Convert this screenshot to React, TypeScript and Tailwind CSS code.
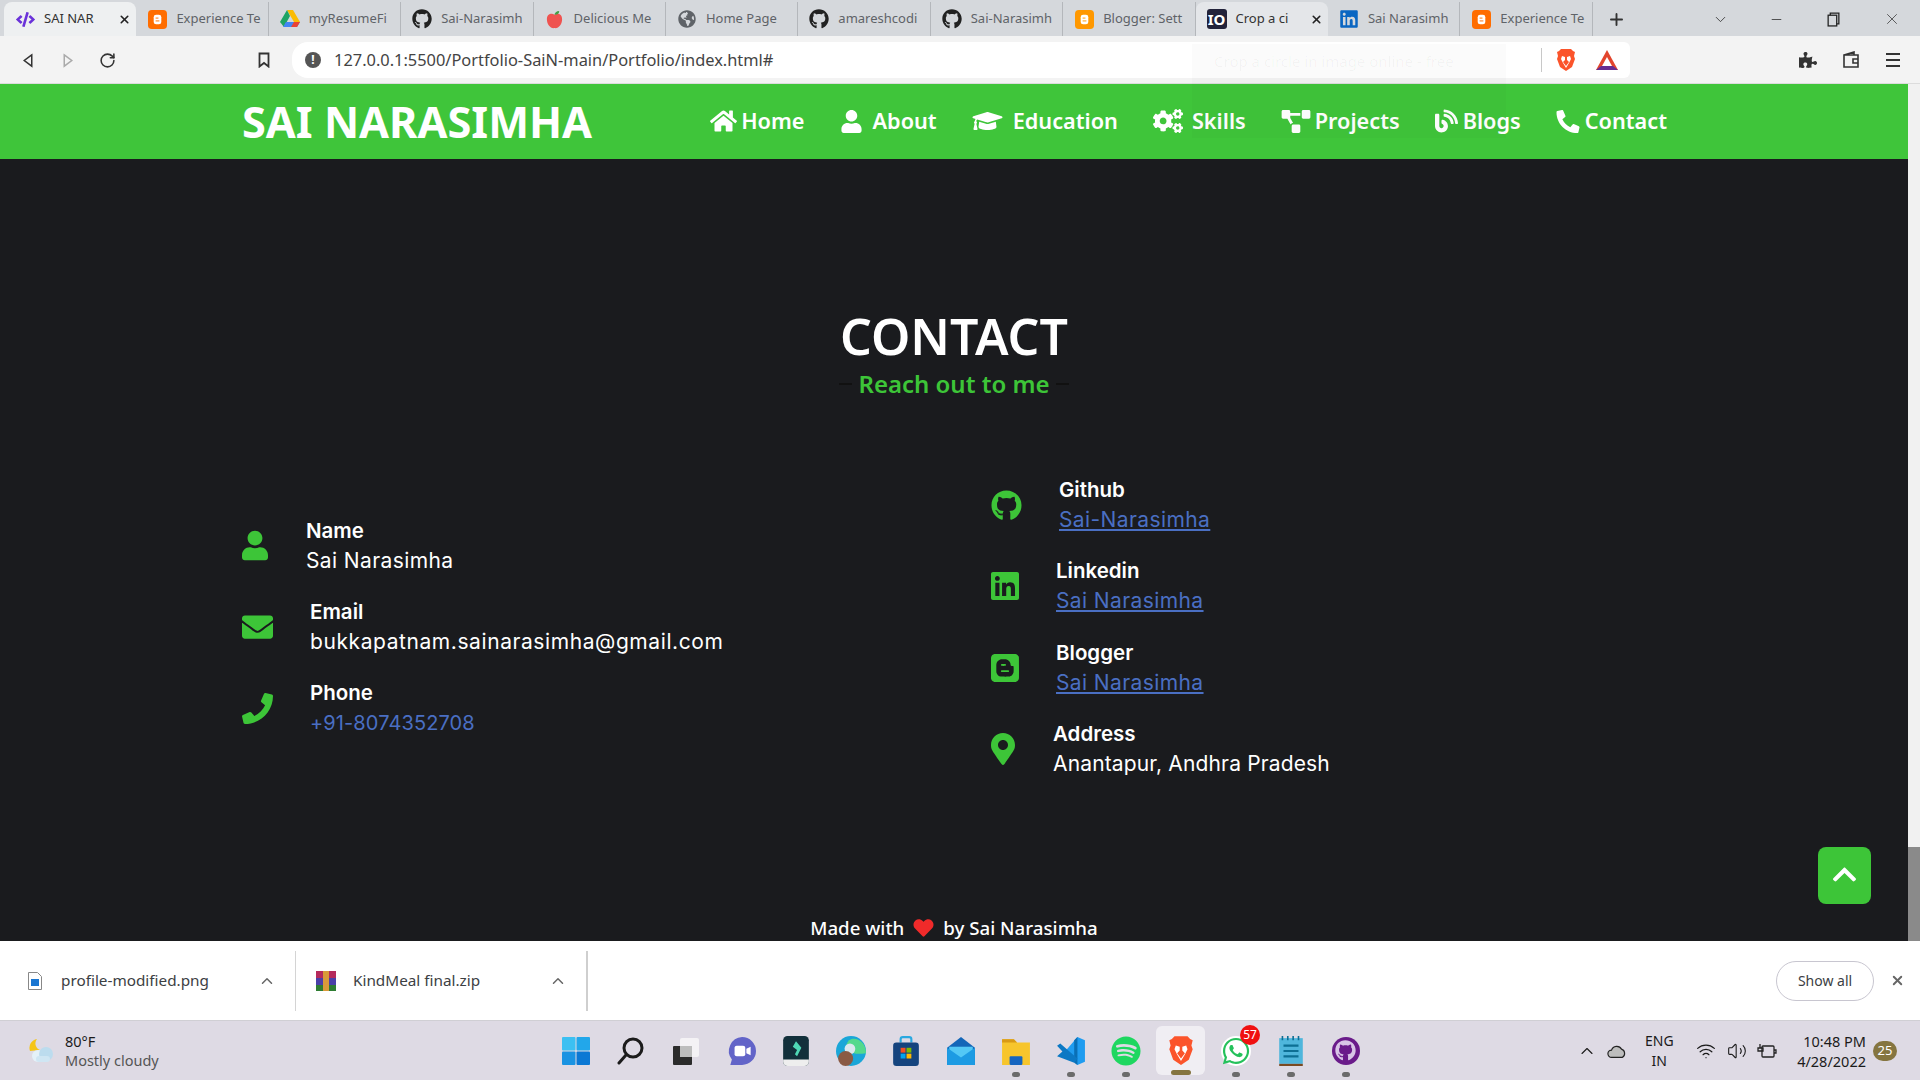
import type { ReactNode } from 'react';
import {
  FaBlog,
  FaBlogger,
  FaChevronUp,
  FaCode,
  FaCogs,
  FaEnvelope,
  FaGithub,
  FaGlobeAmericas,
  FaGraduationCap,
  FaHeart,
  FaHome,
  FaLinkedin,
  FaMapMarkerAlt,
  FaPhone,
  FaPhoneAlt,
  FaProjectDiagram,
  FaPuzzlePiece,
  FaSpotify,
  FaUser,
  FaWhatsapp,
} from 'react-icons/fa';
import { ChevronDown, ChevronUp, Minus, Plus, RotateCw, Volume2, Wifi, X } from 'lucide-react';

const GREEN = 'text-[#3dc538]';

function BloggerIcon({ color }: { color: string }) {
  return (
    <svg viewBox="0 0 20 20" className="h-[19px] w-[19px]">
      <rect width="20" height="20" rx="4" fill={color} />
      <rect x="6" y="5" width="8" height="10" rx="2.5" fill="#fff" />
      <rect x="8" y="8" width="3" height="1" fill={color} />
      <rect x="8" y="11" width="4" height="1" fill={color} />
    </svg>
  );
}

function Drive() {
  return (
    <svg viewBox="0 0 20 18" className="h-[18px] w-[20px]">
      <path d="M7 0h6l7 12h-6z" fill="#fbbc04" />
      <path d="M7 0l3 6-6 11-4-5z" fill="#1fa463" />
      <path d="M6 12h14l-3 5H3z" fill="#4285f4" />
      <path d="M14 12h6l-3 5h-6z" fill="#ea4335" />
    </svg>
  );
}

function Apple() {
  return (
    <svg viewBox="0 0 20 20" className="h-[19px] w-[19px]">
      <path d="M10 5c-3-2-8-1-8 5 0 5 4 10 8 9 4 1 8-4 8-9 0-6-5-7-8-5z" fill="#ef5350" />
      <path d="M10 5c0-2 2-4 5-4 0 3-2 4-5 4z" fill="#43a047" />
    </svg>
  );
}

const tabs: { icon: ReactNode; title: string; active?: boolean; hover?: boolean }[] = [
  { icon: <FaCode className="h-[19px] w-[19px] text-[#6a32d9]" />, title: 'SAI NAR', active: true },
  { icon: <BloggerIcon color="#ff6d00" />, title: 'Experience Te' },
  { icon: <Drive />, title: 'myResumeFi' },
  { icon: <FaGithub className="h-[20px] w-[20px] text-[#222]" />, title: 'Sai-Narasimh' },
  { icon: <Apple />, title: 'Delicious Me' },
  { icon: <FaGlobeAmericas className="h-[18px] w-[18px] text-[#5f6368]" />, title: 'Home Page' },
  { icon: <FaGithub className="h-[20px] w-[20px] text-[#222]" />, title: 'amareshcodi' },
  { icon: <FaGithub className="h-[20px] w-[20px] text-[#222]" />, title: 'Sai-Narasimh' },
  { icon: <BloggerIcon color="#ff9800" />, title: 'Blogger: Sett' },
  {
    icon: (
      <span className="flex h-[20px] w-[20px] items-center justify-center rounded-[3px] bg-[#23233a] text-[15px] leading-none font-bold text-white">
        IO
      </span>
    ),
    title: 'Crop a ci',
    hover: true,
  },
  { icon: <FaLinkedin className="h-[20px] w-[20px] text-[#0a66c2]" />, title: 'Sai Narasimh' },
  { icon: <BloggerIcon color="#ff6d00" />, title: 'Experience Te' },
];

function TabStrip() {
  return (
    <div className="flex h-[36px] shrink-0 items-end bg-[#d5d8dc] pl-[4px] font-['Noto_Sans',sans-serif] text-[13px]">
      {tabs.map((tab, i) => {
        const lit = tab.active || tab.hover;
        return (
          <div
            key={i}
            className={`flex h-[34px] w-[132.4px] shrink-0 items-center pl-[11px] ${
              tab.active ? 'rounded-t-lg bg-[#eef0f1]' : tab.hover ? 'rounded-t-lg bg-[#e4e6e9]' : 'border-r border-[#b4b7bb]'
            }`}
          >
            <span className="flex w-[20px] shrink-0 justify-center">{tab.icon}</span>
            <span className={`ml-[9px] min-w-0 flex-1 whitespace-nowrap ${lit ? 'text-[#333]' : 'text-[#5f6368]'}`}>{tab.title}</span>
            {lit ? <X className="mx-[5px] h-[13px] w-[13px] shrink-0 text-[#222]" strokeWidth={3} /> : <span className="w-[7px] shrink-0" />}
          </div>
        );
      })}
      <div className="flex h-[34px] items-center pl-[14px]">
        <Plus className="h-[19px] w-[19px] text-[#333]" strokeWidth={2.4} />
      </div>
      <div className="ml-auto flex h-[34px] items-center text-[#333]">
        <ChevronDown className="h-[17px] w-[17px]" strokeWidth={1.2} />
        <Minus className="ml-[40px] h-[15px] w-[15px]" strokeWidth={1.3} />
        <svg viewBox="0 0 14 14" className="ml-[42px] h-[15px] w-[15px]" fill="none" stroke="#222" strokeWidth="1.2">
          <rect x="2" y="3" width="8" height="10" />
          <path d="M4 3V1h8v10h-2" />
        </svg>
        <X className="mr-[19px] ml-[42px] h-[18px] w-[18px]" strokeWidth={1} />
      </div>
    </div>
  );
}

function BraveLion({ size }: { size: number }) {
  return (
    <svg viewBox="0 0 20 24" width={size} height={size * 1.2}>
      <path d="M5 1h10l2 2 2 1-1 4 1 3-3 8-6 4-6-4-3-8 1-3-1-4 2-1z" fill="#fb542b" />
      <path d="M6 8l3 1v3l-2 2 3 4 3-4-2-2V9l3-1 1 3-2 4-3 5-3-5-2-4z" fill="#fff" />
    </svg>
  );
}

function Toolbar() {
  return (
    <div className="flex h-[48px] shrink-0 items-center border-b border-[#dcdcdc] bg-[#f3f3f3] pt-[1px] text-[#444]">
      <svg viewBox="0 0 12 16" className="ml-[22px] h-[15px] w-[12px]" fill="none" stroke="#333" strokeWidth="1.6">
        <path d="M10 2L2 8l8 6z" />
      </svg>
      <svg viewBox="0 0 12 16" className="ml-[28px] h-[15px] w-[12px]" fill="none" stroke="#aaa" strokeWidth="1.6">
        <path d="M2 2l8 6-8 6z" />
      </svg>
      <RotateCw className="ml-[25px] h-[17px] w-[17px] text-[#333]" strokeWidth={2.2} />
      <svg viewBox="0 0 12 16" className="ml-[142px] h-[16px] w-[12px]" fill="none" stroke="#333" strokeWidth="1.8">
        <path d="M1.5 1.5h9v13L6 11l-4.500 3.500z" />
      </svg>
      <div className="relative ml-[22px] flex h-[36px] w-[1338px] items-center rounded-l-2xl rounded-r-md bg-white pl-[13px] font-['Noto_Sans',sans-serif] text-[16.4px] text-[#444]">
        <span className="flex h-[16px] w-[16px] items-center justify-center rounded-full bg-[#555] text-[12px] leading-none font-bold text-white">!</span>
        <span className="ml-[13px]">127.0.0.1:5500/Portfolio-SaiN-main/Portfolio/index.html#</span>
        <span className="ml-auto h-[24px] w-px bg-[#c8c8c8]" />
        <span className="ml-[14px] flex">
          <BraveLion size={20} />
        </span>
        <svg viewBox="0 0 22 20" className="mr-[12px] ml-[20px] h-[20px] w-[22px]">
          <path d="M11 0l11 20H0z" fill="#e2452d" />
          <path d="M11 7l5 9H6z" fill="#fff" />
          <path d="M0 20l5-4h12l5 4z" fill="#662d91" />
        </svg>
      </div>
      <FaPuzzlePiece className="ml-[169px] h-[18px] w-[18px] text-[#333]" />
      <svg viewBox="0 0 18 18" className="ml-[25px] h-[18px] w-[18px]" fill="none" stroke="#333" strokeWidth="1.6">
        <path d="M2 4l10-3v3M2 4h14v12H2zM11 8h5v4h-5z" />
      </svg>
      <div className="ml-[26px] flex w-[14px] flex-col gap-[4px]">
        <span className="h-[2px] bg-[#333]" />
        <span className="h-[2px] bg-[#333]" />
        <span className="h-[2px] bg-[#333]" />
      </div>
    </div>
  );
}

const navLinks: { icon: ReactNode; label: string; gap: string }[] = [
  { icon: <FaHome className="h-[24px] w-[27px]" />, label: 'Home', gap: 'gap-[4px]' },
  { icon: <FaUser className="h-[23px] w-[23px]" />, label: 'About', gap: 'gap-[10px]' },
  { icon: <FaGraduationCap className="h-[24px] w-[31px]" />, label: 'Education', gap: 'gap-[10px]' },
  { icon: <FaCogs className="h-[24px] w-[30px]" />, label: 'Skills', gap: 'gap-[9px]' },
  { icon: <FaProjectDiagram className="h-[23px] w-[30px]" />, label: 'Projects', gap: 'gap-[4px]' },
  { icon: <FaBlog className="h-[24px] w-[23px]" />, label: 'Blogs', gap: 'gap-[5px]' },
  { icon: <FaPhoneAlt className="h-[23px] w-[24px]" />, label: 'Contact', gap: 'gap-[5px]' },
];

function Nav() {
  return (
    <nav className="flex h-[75px] shrink-0 items-center justify-between bg-[#3fc53a] pr-[241px] pl-[242px] font-['Noto_Sans',sans-serif] text-white">
      <span className="text-[43.3px] leading-none font-bold">SAI NARASIMHA</span>
      <div className="flex items-center gap-[35px]">
        {navLinks.map((link) => (
          <span key={link.label} className={`flex items-center ${link.gap} text-[21.7px] font-semibold`}>
            {link.icon}
            {link.label}
          </span>
        ))}
      </div>
    </nav>
  );
}

type ContactRow = { icon: ReactNode; label: string; value: string; kind?: 'link' | 'tel'; gap: string; spacing?: string };

const leftRows: ContactRow[] = [
  { icon: <FaUser className="h-[31px] w-[26px]" />, label: 'Name', value: 'Sai Narasimha', gap: 'gap-[38px]' },
  { icon: <FaEnvelope className="h-[32px] w-[31px]" />, label: 'Email', value: 'bukkapatnam.sainarasimha@gmail.com', gap: 'gap-[37px]', spacing: 'tracking-[0.58px]' },
  { icon: <FaPhone className="h-[31px] w-[31px]" />, label: 'Phone', value: '+91-8074352708', kind: 'tel', gap: 'gap-[37px]' },
];

const rightRows: ContactRow[] = [
  { icon: <FaGithub className="h-[31px] w-[31px]" />, label: 'Github', value: 'Sai-Narasimha', kind: 'link', gap: 'gap-[37px]' },
  { icon: <FaLinkedin className="h-[32px] w-[28px]" />, label: 'Linkedin', value: 'Sai Narasimha', kind: 'link', gap: 'gap-[37px]' },
  { icon: <FaBlogger className="h-[32px] w-[28px]" />, label: 'Blogger', value: 'Sai Narasimha', kind: 'link', gap: 'gap-[37px]' },
  { icon: <FaMapMarkerAlt className="h-[32px] w-[24px]" />, label: 'Address', value: 'Anantapur, Andhra Pradesh', gap: 'gap-[38px]', spacing: 'tracking-[0.15px]' },
];

function Row({ row }: { row: ContactRow }) {
  return (
    <div className={`flex h-[60px] items-center ${row.gap}`}>
      <span className={`flex shrink-0 ${GREEN}`}>{row.icon}</span>
      <div className="leading-[30px]">
        <p className="text-[20.5px] font-semibold text-white">{row.label}</p>
        {row.kind === 'link' && <p className="text-[21px] tracking-[0.4px] text-[#4a6fc3] underline underline-offset-2">{row.value}</p>}
        {row.kind === 'tel' && <p className="text-[20px] tracking-[0.1px] text-[#4a6fc3]">{row.value}</p>}
        {!row.kind && <p className={`text-[21px] text-white ${row.spacing ?? 'tracking-[0.4px]'}`}>{row.value}</p>}
      </div>
    </div>
  );
}

function Contact() {
  return (
    <section className="flex min-h-0 flex-1 flex-col overflow-hidden bg-[#1a1b1e]">
      <div className="pt-[149px] text-center font-['Noto_Sans',sans-serif]">
        <h2 className="text-[50px] leading-[56px] font-semibold text-white">CONTACT</h2>
        <div className="mt-[4px] flex items-center justify-center gap-[6px] text-[24px] leading-[32px] font-semibold text-[#3dc538]">
          <span className="h-[2px] w-[13px] bg-[#111]" />
          Reach out to me
          <span className="h-[2px] w-[13px] bg-[#111]" />
        </div>
      </div>
      <div className="mt-[75px] grid grid-cols-[749px_1fr] items-center pl-[242px] font-['Inter',sans-serif]">
        <div className="flex flex-col gap-[21.330px]">
          {leftRows.map((row) => (
            <Row key={row.label} row={row} />
          ))}
        </div>
        <div className="flex flex-col gap-[21.330px]">
          {rightRows.map((row) => (
            <Row key={row.label} row={row} />
          ))}
        </div>
      </div>
      <p className="mt-[135px] flex items-center justify-center gap-[9px] font-['Noto_Sans',sans-serif] text-[18.7px] leading-[28px] font-medium text-white">
        Made with
        <FaHeart className="h-[20px] w-[21px] text-[#f02a2a]" />
        by Sai Narasimha
      </p>
    </section>
  );
}

function Downloads() {
  return (
    <div className="flex h-[80px] shrink-0 items-center border-b border-[#d0cfd4] bg-white font-['Noto_Sans',sans-serif] text-[15.3px] text-[#3c4043]">
      <div className="flex h-[60px] w-[296px] items-center border-r border-[#d4d4d4] pl-[28px]">
        <svg viewBox="0 0 14 18" className="h-[18px] w-[14px]">
          <path d="M.5.5h9l4 4v13H.5z" fill="#fff" stroke="#888" />
          <rect x="3" y="7" width="8" height="7" fill="#1976d2" />
        </svg>
        <span className="ml-[19px]">profile-modified.png</span>
        <ChevronUp className="mr-[19px] ml-auto h-[18px] w-[18px] text-[#666]" strokeWidth={2} />
      </div>
      <div className="flex h-[60px] w-[292px] items-center border-r-2 border-[#cfcfcf] pl-[20px]">
        <svg viewBox="0 0 20 20" className="h-[20px] w-[20px]">
          <rect width="20" height="7" fill="#b52a5c" />
          <rect y="7" width="20" height="7" fill="#4a3fa8" />
          <rect y="14" width="20" height="6" fill="#2e7d32" />
          <rect x="7" width="6" height="20" fill="#d99a3a" />
        </svg>
        <span className="ml-[17px]">KindMeal final.zip</span>
        <ChevronUp className="mr-[19px] ml-auto h-[18px] w-[18px] text-[#666]" strokeWidth={2} />
      </div>
      <span className="mr-[1px] ml-auto flex h-[40px] w-[98px] items-center justify-center rounded-full border border-[#c8c6d0] text-[14px]">Show all</span>
      <X className="mx-[15px] h-[15px] w-[15px] text-[#666]" strokeWidth={3} />
    </div>
  );
}

const taskIcons: { icon: ReactNode; dot?: boolean; active?: boolean; badge?: string }[] = [
  {
    icon: (
      <svg viewBox="0 0 28 28" className="h-[28px] w-[28px]">
        <rect width="13.500" height="13.500" rx="1" fill="#3cc0f2" />
        <rect x="14.500" width="13.500" height="13.500" rx="1" fill="#22a7ea" />
        <rect y="14.500" width="13.500" height="13.500" rx="1" fill="#1a93e2" />
        <rect x="14.500" y="14.500" width="13.500" height="13.500" rx="1" fill="#0b78d4" />
      </svg>
    ),
  },
  {
    icon: (
      <svg viewBox="0 0 28 28" className="h-[28px] w-[28px]" fill="none" stroke="#1b1b1b" strokeWidth="3">
        <circle cx="16" cy="11" r="9" />
        <path d="M9 18l-7 8" strokeLinecap="round" />
      </svg>
    ),
  },
  {
    icon: (
      <svg viewBox="0 0 28 28" className="h-[28px] w-[28px]">
        <rect x="8" y="1" width="19" height="19" rx="2" fill="#f4f2f5" />
        <rect x="1" y="9" width="19" height="19" rx="1" fill="#2b2b2b" />
        <rect x="8" y="9" width="12" height="11" fill="#bdbdbd" />
      </svg>
    ),
  },
  {
    icon: (
      <svg viewBox="0 0 28 28" className="h-[30px] w-[30px]">
        <path d="M15 1a13 13 0 0 1 0 26H4l1.500-5A13 13 0 0 1 15 1z" fill="#6264c8" />
        <rect x="8" y="9" width="10" height="10" rx="2" fill="#fff" />
        <path d="M19 12l4-2v8l-4-2z" fill="#fff" />
      </svg>
    ),
  },
  {
    icon: (
      <svg viewBox="0 0 28 28" className="h-[30px] w-[30px]">
        <rect x="2" width="24" height="28" rx="4" fill="#12303b" />
        <path d="M2 22h24v2a4 4 0 0 1-4 4H6a4 4 0 0 1-4-4z" fill="#eee" />
        <path d="M14 5l5 6-4 8-2-2 2-4-4-3z" fill="#4fd8b5" />
      </svg>
    ),
  },
  {
    icon: (
      <svg viewBox="0 0 28 28" className="h-[30px] w-[30px]">
        <circle cx="14" cy="14" r="14" fill="#1aa6d8" />
        <path d="M28 16C28 6 20 1 14 3 9 5 8 12 13 15c4 2 9 2 15 1z" fill="#54d98c" />
        <circle cx="13" cy="12" r="5" fill="#dbe8ee" />
        <circle cx="9" cy="21" r="7" fill="#8a5a44" />
      </svg>
    ),
  },
  {
    icon: (
      <svg viewBox="0 0 28 28" className="h-[30px] w-[30px]">
        <path d="M9 6V3a2 2 0 0 1 2-2h6a2 2 0 0 1 2 2v3" fill="none" stroke="#29a8e0" strokeWidth="2" />
        <rect x="2" y="6" width="24" height="22" rx="3" fill="#15447e" />
        <rect x="9" y="11" width="4.500" height="4.500" fill="#f25022" />
        <rect x="14.500" y="11" width="4.500" height="4.500" fill="#7fba00" />
        <rect x="9" y="16.500" width="4.500" height="4.500" fill="#00a4ef" />
        <rect x="14.500" y="16.500" width="4.500" height="4.500" fill="#ffb900" />
      </svg>
    ),
  },
  {
    icon: (
      <svg viewBox="0 0 28 28" className="h-[30px] w-[30px]">
        <path d="M14 1l13 10v16H1V11z" fill="#1366b8" />
        <path d="M3 10h22v17H3z" fill="#53c8f5" />
        <path d="M1 11l13 9 13-9v16H1z" fill="#1d9be3" />
      </svg>
    ),
  },
  {
    dot: true,
    icon: (
      <svg viewBox="0 0 28 28" className="h-[30px] w-[30px]">
        <path d="M1 3h11l3 3h12v21H1z" fill="#f7c52c" />
        <path d="M1 3h11l3 3H1z" fill="#d99a15" />
        <rect x="8" y="19" width="12" height="8" rx="1" fill="#1565c0" />
      </svg>
    ),
  },
  {
    dot: true,
    icon: (
      <svg viewBox="0 0 28 28" className="h-[30px] w-[30px]">
        <path d="M20 1l7 3v20l-7 3L8 15z" fill="#1f9cf0" />
        <path d="M20 1v26l-3-2V4z" fill="#0a6fb5" />
        <path d="M1 9l3-2 16 14-3 4L1 19l5-4.500z" fill="#0b78c4" />
      </svg>
    ),
  },
  { dot: true, icon: <FaSpotify className="h-[30px] w-[30px] text-[#1ed760]" /> },
  { active: true, icon: <BraveLion size={26} /> },
  {
    dot: true,
    badge: '57',
    icon: (
      <span className="flex h-[30px] w-[30px] items-center justify-center rounded-full bg-white">
        <FaWhatsapp className="h-[30px] w-[30px] text-[#25c15b]" />
      </span>
    ),
  },
  {
    dot: true,
    icon: (
      <svg viewBox="0 0 28 28" className="h-[30px] w-[30px]">
        <rect x="3" y="2" width="22" height="24" fill="#4fb6dc" />
        <rect x="3" y="26" width="22" height="2" fill="#7a4a22" />
        <path d="M7 9h14M7 14h14M7 19h14" stroke="#0d6f94" strokeWidth="2" />
        <path d="M6 0v4M11 0v4M16 0v4M21 0v4" stroke="#0d6f94" strokeWidth="1.500" />
      </svg>
    ),
  },
  {
    dot: true,
    icon: (
      <span className="flex h-[28px] w-[28px] items-center justify-center rounded-full bg-[#6a1b8a]">
        <FaGithub className="h-[21px] w-[21px] text-[#d8c4e6]" />
      </span>
    ),
  },
];

function Taskbar() {
  return (
    <div className="relative flex h-[59px] shrink-0 items-center bg-[#dedae4] font-['Noto_Sans',sans-serif] text-[13px] text-[#1b1b1b]">
      <svg viewBox="0 0 28 28" className="ml-[27px] h-[28px] w-[28px]">
        <path d="M10 2a7 7 0 0 0 3 11L3 14A9 9 0 0 1 10 2z" fill="#f5c518" />
        <circle cx="11" cy="19" r="6" fill="#e4f1f8" />
        <circle cx="19" cy="17" r="7" fill="#bcdcee" />
        <rect x="9" y="19" width="14" height="6" rx="3" fill="#cfe6f3" />
      </svg>
      <div className="ml-[10px] w-[483px] text-[14.5px] leading-[19px]">
        <p>80°F</p>
        <p className="text-[#555]">Mostly cloudy</p>
      </div>
      <div className="flex">
        {taskIcons.map((item, i) => (
          <div key={i} className="relative flex h-[55px] w-[55px] items-center justify-center">
            {item.active && <span className="absolute inset-y-[3px] inset-x-[3px] rounded-md bg-[#f0eef3]" />}
            <span className="relative flex">{item.icon}</span>
            {item.dot && <span className="absolute bottom-[1px] h-[5px] w-[8px] rounded-sm bg-[#6b6b6b]" />}
            {item.active && <span className="absolute bottom-[3px] h-[5px] w-[20px] rounded-sm bg-[#857540]" />}
            {item.badge && (
              <span className="absolute top-[2px] right-[3px] flex h-[20px] w-[20px] items-center justify-center rounded-full bg-[#f01010] text-[12px] leading-none text-white">
                {item.badge}
              </span>
            )}
          </div>
        ))}
      </div>
      <ChevronUp className="ml-[204px] h-[20px] w-[20px]" strokeWidth={1.3} />
      <svg viewBox="0 0 22 16" className="ml-[10px] h-[16px] w-[20px]">
        <path d="M5 15a4 4 0 0 1 0-8 6 6 0 0 1 11-1 5 5 0 0 1 1 9z" fill="#bdbdbd" stroke="#222" strokeWidth="1.300" />
      </svg>
      <div className="ml-[18px] text-center text-[14px] leading-[20px]">
        <p>ENG</p>
        <p>IN</p>
      </div>
      <Wifi className="ml-[22px] h-[20px] w-[20px]" strokeWidth={1.5} />
      <Volume2 className="ml-[11px] h-[20px] w-[20px]" strokeWidth={1.3} />
      <svg viewBox="0 0 20 16" className="ml-[10px] h-[16px] w-[20px]" fill="none" stroke="#222" strokeWidth="1.300">
        <rect x="5" y="3" width="12" height="11" rx="1" />
        <path d="M17 7h2v3h-2M3 1v4M1 5h5v3H1z" />
      </svg>
      <div className="ml-auto text-right text-[14.5px] leading-[20px]">
        <p>10:48 PM</p>
        <p>4/28/2022</p>
      </div>
      <span className="mr-[23px] ml-[7px] flex h-[20px] w-[24px] items-center justify-center rounded-full bg-[#857540] text-[13px] text-white">25</span>
    </div>
  );
}

export default function App() {
  return (
    <div className="relative flex h-screen w-full flex-col overflow-hidden bg-[#1a1b1e]">
      <TabStrip />
      <Toolbar />
      <div className="relative flex min-h-0 flex-1">
        <main className="flex min-w-0 flex-1 flex-col">
          <Nav />
          <Contact />
        </main>
        <div className="flex w-[12px] shrink-0 flex-col justify-end bg-[#f1f1f1]">
          <div className="h-[94px] bg-[#8a8a8a]" />
        </div>
        <button className="absolute right-[49px] bottom-[37px] flex h-[57px] w-[53px] items-center justify-center rounded-lg bg-[#3dc538] text-white">
          <FaChevronUp className="mb-[2px] h-[27px] w-[27px]" />
        </button>
      </div>
      <Downloads />
      <Taskbar />
      <div className="pointer-events-none absolute top-[44px] left-[1192px] h-[94px] w-[314px] bg-black/[0.015] pt-[6px] pl-[22px] font-['Noto_Sans',sans-serif] text-[15px] text-black/[0.04]">
        Crop a circle in image online - free
      </div>
    </div>
  );
}
